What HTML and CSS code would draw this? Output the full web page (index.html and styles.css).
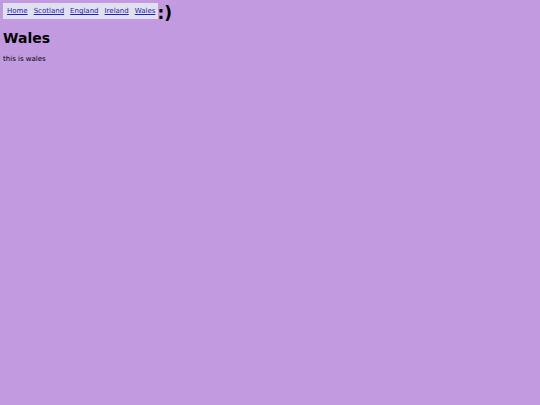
FILE: index.html
```html
<!DOCTYPE html>
<html>
<head>
<meta charset="utf-8">
<link rel="stylesheet" href="styles.css">
</head>
<body>
<div class="top">
  <nav class="nav">
    <a href="#">Home</a>
    <a href="#">Scotland</a>
    <a href="#">England</a>
    <a href="#">Ireland</a>
    <a href="#">Wales</a>
  </nav>
  <span class="smile">:)</span>
</div>
<h1 class="title">Wales</h1>
<p class="text">this is wales</p>
</body>
</html>
```
FILE: styles.css
```css
html, body {
  background: #c29ae0;
}
body {
  margin: 0;
  padding: 3px 3px;
  font-family: "DejaVu Sans", Verdana, sans-serif;
  font-size: 7px;
  color: #000;
}
.top {
  display: flex;
  align-items: flex-start;
}
.nav {
  background: #e0e0ee;
  padding: 4px 3px 4px 4px;
  line-height: 8px;
  display: flex;
  gap: 6px;
}
.nav a {
  color: #2222bb;
  text-decoration: underline;
}
.smile {
  font-size: 17px;
  font-weight: bold;
  line-height: 18px;
  margin-top: 1px;
  margin-left: -1px;
}
.title {
  font-size: 14px;
  font-weight: bold;
  margin: 8px 0 0 0;
  line-height: 17px;
}
.text {
  margin: 8px 0 0 0;
}
```
